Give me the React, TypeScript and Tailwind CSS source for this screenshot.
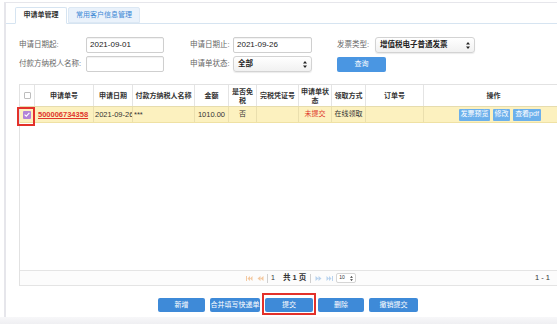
import { ReactNode } from 'react'

const font = "font-['Liberation_Sans','Noto_Sans_CJK_SC',sans-serif]"

interface IColumn {
    w: string
    head: ReactNode
}

const columns: IColumn[] = [
    { w: 'w-[15px]', head: 'checkbox' },
    { w: 'w-[59px]', head: '申请单号' },
    { w: 'w-[39px]', head: '申请日期' },
    { w: 'w-[62px]', head: '付款方纳税人名称' },
    { w: 'w-[34px]', head: '金额' },
    { w: 'w-[28px]', head: <>是否免<br />税</> },
    { w: 'w-[42px]', head: '完税凭证号' },
    { w: 'w-[33px]', head: <>申请单状<br />态</> },
    { w: 'w-[34px]', head: '领取方式' },
    { w: 'w-[58px]', head: '订单号' },
    { w: 'w-[140px]', head: '操作' },
]

function TextInput({ value, w }: { value?: string; w: string }) {
    return (
        <div
            className={`${w} h-[16px] border border-[#cfcfcf] rounded-[2px] bg-white shadow-[inset_0_1px_1px_rgba(0,0,0,0.06)] flex items-center pl-[3px] text-[8px] text-[#222]`}
        >
            {value}
        </div>
    )
}

function Arrows() {
    return (
        <svg width="4" height="7" viewBox="0 0 4 7" className="shrink-0">
            <path d="M2 0 L4 2.6 L0 2.6 Z M2 7 L4 4.4 L0 4.4 Z" fill="#222" />
        </svg>
    )
}

function MacSelect({ value, w }: { value: string; w: string }) {
    return (
        <div
            className={`${w} h-[16px] rounded-[3px] border border-[#d3d3d3] bg-gradient-to-b from-white to-[#f1f1f1] shadow-[0_1px_1px_rgba(0,0,0,0.08)] flex items-center justify-between pl-[4px] pr-[4px] text-[7.5px] font-semibold text-[#222]`}
        >
            <span>{value}</span>
            <Arrows />
        </div>
    )
}

function FirstIcon({ color, flip }: { color: string; flip?: boolean }) {
    return (
        <svg
            width="7"
            height="5"
            viewBox="0 0 7 5"
            className={flip ? 'rotate-180' : ''}
        >
            <rect x="0" y="0" width="1" height="5" fill={color} />
            <path d="M1.5 2.5 L4 0 L4 5 Z M4 2.5 L6.5 0 L6.5 5 Z" fill={color} />
        </svg>
    )
}

function PrevIcon({ color, flip }: { color: string; flip?: boolean }) {
    return (
        <svg
            width="7"
            height="5"
            viewBox="0 0 7 5"
            className={flip ? 'rotate-180' : ''}
        >
            <path d="M0.5 2.5 L3.5 0 L3.5 5 Z M3.5 2.5 L6.5 0 L6.5 5 Z" fill={color} />
        </svg>
    )
}

function Button({ label, className }: { label: string; className?: string }) {
    return (
        <div
            className={`h-[14px] rounded-[2px] bg-[#3e8ad8] text-white text-[7px] flex items-center justify-center whitespace-nowrap ${className}`}
        >
            {label}
        </div>
    )
}

function OpButton({ label, w }: { label: string; w: string }) {
    return (
        <div
            className={`${w} h-[12px] rounded-[1px] bg-[#6cb0ec] text-white text-[7px] flex items-center justify-center whitespace-nowrap`}
        >
            {label}
        </div>
    )
}

export default function App() {
    return (
        <div className={`w-[557px] h-[324px] bg-white overflow-hidden flex flex-col ${font}`}>
            <div className="pl-[4px] pt-[2px]">
                <div className="h-[315px] border-l-2 border-t border-[#e6e6eb]">
                    {/* tabs */}
                    <div className="pt-[4px] pl-[4px] border-b border-[#d6e4f1] flex items-end">
                        <div className="ml-[5px] -mb-px w-[52px] h-[17px] bg-white border border-[#d6e4f1] border-b-white rounded-t-[2px] flex items-center justify-center text-[7px] font-bold text-[#333]">
                            申请单管理
                        </div>
                        <div className="ml-[1px] w-[72px] h-[16px] bg-[#eaf2fb] border border-[#dce8f4] rounded-t-[2px] flex items-center justify-center text-[7px] text-[#3b87d5]">
                            常用客户信息管理
                        </div>
                    </div>

                    {/* query form */}
                    <div className="pl-[13px] pt-[13px] flex flex-col gap-[3px] text-[7.5px] text-[#666]">
                        <div className="flex items-center h-[16px]">
                            <span className="w-[67px]">申请日期起:</span>
                            <TextInput w="w-[78px]" value="2021-09-01" />
                            <span className="w-[26px]" />
                            <span className="w-[43px]">申请日期止:</span>
                            <TextInput w="w-[79px]" value="2021-09-26" />
                            <span className="w-[25px]" />
                            <span className="w-[38px]">发票类型:</span>
                            <MacSelect w="w-[100px]" value="增值税电子普通发票" />
                        </div>
                        <div className="flex items-center h-[16px]">
                            <span className="w-[67px]">付款方纳税人名称:</span>
                            <TextInput w="w-[78px]" />
                            <span className="w-[26px]" />
                            <span className="w-[43px]">申请单状态:</span>
                            <MacSelect w="w-[79px]" value="全部" />
                            <span className="w-[25px]" />
                            <div className="w-[49px] h-[15px] rounded-[2px] bg-[#4a96e2] text-white text-[7px] flex items-center justify-center">
                                查询
                            </div>
                        </div>
                    </div>

                    {/* grid */}
                    <div className="mt-[12px] ml-[13px] w-[544px] border-l border-t border-[#e2e2e2] text-[7px] text-[#333]">
                        <div className="flex h-[22px] border-b border-[#e6dcae]">
                            {columns.map((col, i) => (
                                <div
                                    key={i}
                                    className={`${col.w} shrink-0 border-r border-[#e4e4e4] flex items-center justify-center text-center leading-[9px] font-semibold`}
                                >
                                    {col.head === 'checkbox' ? (
                                        <div className="w-[7px] h-[7px] border border-[#bdbdbd] rounded-[1px] bg-white" />
                                    ) : (
                                        col.head
                                    )}
                                </div>
                            ))}
                        </div>

                        <div className="flex h-[16px] bg-[#fcf1bf] border-b border-[#efe1a4]">
                            <div className="w-[15px] shrink-0 border-r border-[#eadfae] flex items-center justify-center relative">
                                <div className="w-[8px] h-[8px] rounded-[1px] bg-[#b184d8] flex items-center justify-center">
                                    <svg width="6" height="5" viewBox="0 0 6 5">
                                        <path d="M0.6 2.6 L2.3 4.2 L5.4 0.8" stroke="#fff" strokeWidth="1.1" fill="none" />
                                    </svg>
                                </div>
                                <div className="absolute -left-[3px] top-0 w-[18px] h-[19px] border-2 border-[#e3312a]" />
                            </div>
                            <div className="w-[59px] shrink-0 border-r border-[#eadfae] flex items-center pl-[3px] text-[#e0352b] font-semibold underline text-[7.5px]">
                                500006734358
                            </div>
                            <div className="w-[39px] shrink-0 border-r border-[#eadfae] flex items-center pl-[1px] whitespace-nowrap overflow-hidden text-[7.5px]">
                                2021-09-26
                            </div>
                            <div className="w-[62px] shrink-0 border-r border-[#eadfae] flex items-center pl-[1px] text-[7.5px]">
                                ***
                            </div>
                            <div className="w-[34px] shrink-0 border-r border-[#eadfae] flex items-center justify-end pr-[3px] text-[7.5px]">
                                1010.00
                            </div>
                            <div className="w-[28px] shrink-0 border-r border-[#eadfae] flex items-center justify-center">
                                否
                            </div>
                            <div className="w-[42px] shrink-0 border-r border-[#eadfae]" />
                            <div className="w-[33px] shrink-0 border-r border-[#eadfae] flex items-center justify-center text-[#e0352b]">
                                未提交
                            </div>
                            <div className="w-[34px] shrink-0 border-r border-[#eadfae] flex items-center justify-center">
                                在线领取
                            </div>
                            <div className="w-[58px] shrink-0 border-r border-[#eadfae]" />
                            <div className="w-[140px] shrink-0 flex items-center gap-[3px] pl-[35px]">
                                <OpButton label="发票预览" w="w-[31px]" />
                                <OpButton label="修改" w="w-[17px]" />
                                <OpButton label="查看pdf" w="w-[28px]" />
                            </div>
                        </div>

                        <div className="h-[147px] bg-white" />

                        {/* pager */}
                        <div className="h-[16px] border-t border-b border-[#e4e4e4] bg-[#fcfcfc] flex items-center pl-[226px] pr-[13px] text-[7px] text-[#333]">
                            <div className="flex items-center gap-[4px]">
                                <FirstIcon color="#f3c9a1" />
                                <PrevIcon color="#f3c9a1" />
                            </div>
                            <div className="ml-[3px] w-px h-[9px] bg-[#cfcfcf]" />
                            <span className="ml-[3px]">1</span>
                            <span className="ml-[8px] font-semibold text-[7.5px]">共 1 页</span>
                            <div className="ml-[4px] w-px h-[9px] bg-[#cfcfcf]" />
                            <div className="ml-[4px] flex items-center gap-[4px]">
                                <PrevIcon color="#b9d3ee" flip />
                                <FirstIcon color="#b9d3ee" flip />
                            </div>
                            <div className="ml-[3px] w-[20px] h-[10px] border border-[#d5d5d5] rounded-[2px] bg-white flex items-center justify-between px-[2px] text-[5px]">
                                <span>10</span>
                                <svg width="3" height="5" viewBox="0 0 4 7">
                                    <path d="M2 0 L4 2.6 L0 2.6 Z M2 7 L4 4.4 L0 4.4 Z" fill="#333" />
                                </svg>
                            </div>
                            <span className="ml-auto text-[7.5px]">1 - 1</span>
                        </div>
                    </div>

                    {/* actions */}
                    <div className="mt-[12px] ml-[13px] w-[538px] flex justify-center gap-[5px]">
                        <Button label="新增" className="w-[47px]" />
                        <Button label="合并填写快递单" className="w-[50px]" />
                        <div className="relative">
                            <Button label="提交" className="w-[48px]" />
                            <div className="absolute -left-[3px] -top-[5px] w-[54px] h-[22px] border-2 border-[#e3312a]" />
                        </div>
                        <Button label="删除" className="w-[46px]" />
                        <Button label="撤销提交" className="w-[49px]" />
                    </div>
                </div>
            </div>
            <div className="flex-1 bg-gradient-to-b from-[#f7f7f9] to-[#efeff2]" />
        </div>
    )
}
